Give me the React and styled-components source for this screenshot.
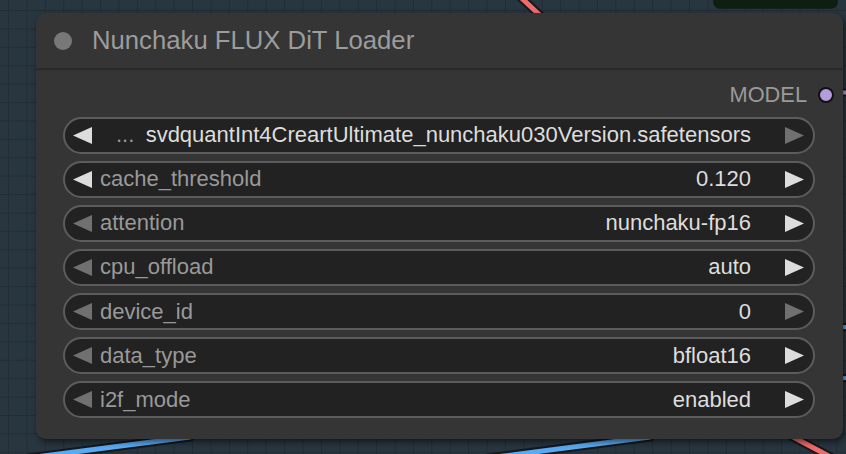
import React from "react";
import styled, { createGlobalStyle } from "styled-components";

const GlobalStyle = createGlobalStyle`
  html, body {
    margin: 0;
    padding: 0;
    background: #283640;
    overflow: hidden;
  }
  * { box-sizing: border-box; }
`;

const Canvas = styled.div`
  position: relative;
  width: 846px;
  height: 454px;
  overflow: hidden;
  background-color: #283640;
  background-image:
    linear-gradient(#222d36 1px, transparent 1px),
    linear-gradient(90deg, #222d36 1px, transparent 1px);
  background-size: 18.42px 18.42px;
  background-position: 8px 10px;
  font-family: "Liberation Sans", Arial, sans-serif;
`;

const WireLayer = styled.svg`
  position: absolute;
  left: 0;
  top: 0;
  width: 846px;
  height: 454px;
`;

const Node = styled.div`
  position: absolute;
  left: 36px;
  top: 13px;
  width: 807px;
  height: 426px;
  background: #353535;
  border-radius: 10px;
  box-shadow: 2px 3px 6px rgba(0, 0, 0, 0.55);
  display: flex;
  flex-direction: column;
`;

const TitleBar = styled.div`
  height: 57px;
  flex: none;
  display: flex;
  align-items: center;
  padding-left: 18px;
  border-bottom: 2px solid #292929;
`;

const TitleDot = styled.span`
  width: 18px;
  height: 18px;
  border-radius: 50%;
  background: #787878;
  flex: none;
`;

const TitleText = styled.span`
  margin-left: 20px;
  font-size: 25.7px;
  color: #9c9c9c;
  white-space: nowrap;
`;

const Body = styled.div`
  display: flex;
  flex-direction: column;
`;

const OutputRow = styled.div`
  margin-top: 12px;
  height: 26px;
  display: flex;
  align-items: center;
  justify-content: flex-end;
  padding-right: 9px;
  gap: 11px;
`;

const OutputLabel = styled.span`
  font-size: 21.8px;
  color: #9a9a9a;
`;

const OutputDot = styled.span`
  width: 16px;
  height: 16px;
  border-radius: 50%;
  background: #b39ddb;
  border: 2px solid #111;
  flex: none;
`;

const WidgetList = styled.div`
  margin-top: 8.5px;
  padding: 0 28px 0 27px;
  display: flex;
  flex-direction: column;
  gap: 7.17px;
`;

const Widget = styled.div`
  height: 37px;
  border-radius: 19px;
  background: #222222;
  border: 2px solid #5c5c5c;
  display: flex;
  align-items: center;
  padding: 0 9px 0 8px;
  font-size: 22px;
  white-space: nowrap;
`;

const ArrowSvg = styled.svg`
  flex: none;
  width: 19px;
  height: 17px;
  fill: ${(p) => (p.$active ? "#dddddd" : "#707070")};
`;

const Label = styled.span`
  color: #999999;
  margin-left: ${(p) => (p.$ellipsis ? "24px" : "8px")};
`;

const Value = styled.span`
  margin-left: auto;
  margin-right: 34px;
  color: #dddddd;
`;

const Arrow = ({ dir, active }) => (
  <ArrowSvg $active={active} viewBox="0 0 19 17">
    {dir === "left" ? (
      <polygon points="19,0 0,8.5 19,17" />
    ) : (
      <polygon points="0,0 19,8.5 0,17" />
    )}
  </ArrowSvg>
);

const widgets = [
  {
    label: "...",
    ellipsis: true,
    value: "svdquantInt4CreartUltimate_nunchaku030Version.safetensors",
    left: true,
    right: false,
  },
  { label: "cache_threshold", value: "0.120", left: true, right: true },
  { label: "attention", value: "nunchaku-fp16", left: false, right: true },
  { label: "cpu_offload", value: "auto", left: false, right: true },
  { label: "device_id", value: "0", left: false, right: false },
  { label: "data_type", value: "bfloat16", left: false, right: true },
  { label: "i2f_mode", value: "enabled", left: false, right: true },
];

const Wire = ({ d, color, w = 5 }) => (
  <g fill="none" strokeLinecap="round">
    <path d={d} stroke="#14191e" strokeWidth={w + 4} />
    <path d={d} stroke={color} strokeWidth={w} />
  </g>
);

export default function App() {
  return (
    <>
      <GlobalStyle />
      <Canvas>
        <WireLayer viewBox="0 0 846 454">
          <rect x="713" y="-12" width="125" height="20.7" rx="7" fill="#0e1e10" />
          <Wire d="M 515 -8 L 545 20" color="#f26b6b" />
          <Wire d="M 28 458 L 190 437" color="#5aaaf2" />
          <Wire d="M 488 458 L 650 437" color="#5aaaf2" />
          <Wire d="M 780 430 L 840 462" color="#f26b6b" />
          <Wire d="M 830 93 L 860 92" color="#b39ddb" w={4} />
          <Wire d="M 830 328 L 860 326" color="#5aaaf2" w={4} />
          <Wire d="M 830 379 L 860 377" color="#5aaaf2" w={4} />
        </WireLayer>
        <Node>
          <TitleBar>
            <TitleDot />
            <TitleText>Nunchaku FLUX DiT Loader</TitleText>
          </TitleBar>
          <Body>
            <OutputRow>
              <OutputLabel>MODEL</OutputLabel>
              <OutputDot />
            </OutputRow>
            <WidgetList>
              {widgets.map((w) => (
                <Widget key={w.label}>
                  <Arrow dir="left" active={w.left} />
                  <Label $ellipsis={w.ellipsis}>{w.label}</Label>
                  <Value>{w.value}</Value>
                  <Arrow dir="right" active={w.right} />
                </Widget>
              ))}
            </WidgetList>
          </Body>
        </Node>
      </Canvas>
    </>
  );
}
